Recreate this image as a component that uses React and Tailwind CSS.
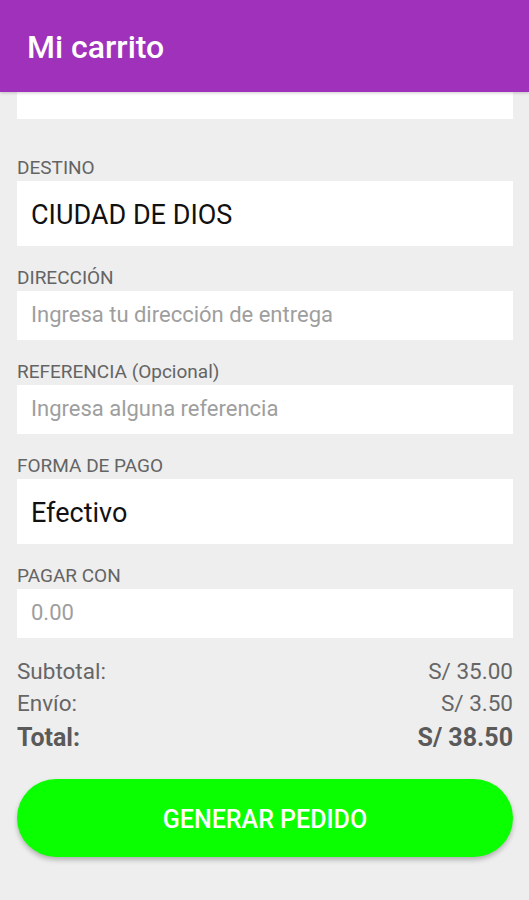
const fieldBase = "bg-white flex items-center pl-[14px]";

function Label({ children }) {
  return (
    <div className="h-[20px] leading-[20px] text-[19px] text-[#646464] mt-[22px] mb-[3px]">{children}</div>
  );
}

export default function App() {
  return (
    <div className="w-[529px] h-[900px] bg-[#eeeeee] overflow-hidden" style={{ fontFamily: "Roboto, 'Noto Sans', sans-serif" }}>
      <div className="h-[92px] bg-[#9f31bb] flex items-center px-[27px] shadow-[0_1px_3px_rgba(0,0,0,0.2)] relative z-10">
        <h1 className="text-white text-[32px] font-medium mt-[2px]">Mi carrito</h1>
      </div>

      <div className="px-[17px] pr-[16px]">
        <div className="h-[27px] bg-white" />

        <div className="h-[20px] leading-[20px] text-[19px] text-[#646464] mt-[39px] mb-[3px]">DESTINO</div>
        <div className={`${fieldBase} h-[65px] text-[27px] text-[#111] pt-[3px]`}>CIUDAD DE DIOS</div>

        <Label>DIRECCIÓN</Label>
        <div className={`${fieldBase} h-[49px] text-[22px] text-[#9e9e9e] pb-[3px]`}>Ingresa tu dirección de entrega</div>

        <Label>REFERENCIA (Opcional)</Label>
        <div className={`${fieldBase} h-[49px] text-[22px] text-[#9e9e9e] pb-[3px]`}>Ingresa alguna referencia</div>

        <Label>FORMA DE PAGO</Label>
        <div className={`${fieldBase} h-[65px] text-[27px] text-[#111] pt-[3px]`}>Efectivo</div>

        <Label>PAGAR CON</Label>
        <div className={`${fieldBase} h-[49px] text-[22px] text-[#9e9e9e] pb-[3px]`}>0.00</div>

        <div className="mt-[18px] text-[22.5px] text-[#666]">
          <div className="flex justify-between h-[32px] items-center">
            <span>Subtotal:</span>
            <span>S/ 35.00</span>
          </div>
          <div className="flex justify-between h-[32px] items-center">
            <span>Envío:</span>
            <span>S/ 3.50</span>
          </div>
          <div className="flex justify-between h-[36px] items-center font-bold text-[25px] text-[#5a5a5a]">
            <span>Total:</span>
            <span>S/ 38.50</span>
          </div>
        </div>

        <button className="mt-[23px] w-full h-[78px] rounded-full bg-[#0aff00] text-white font-medium text-[25px] pt-[4px] shadow-[0_3px_5px_rgba(0,0,0,0.25)]">
          GENERAR PEDIDO
        </button>
      </div>
    </div>
  );
}
